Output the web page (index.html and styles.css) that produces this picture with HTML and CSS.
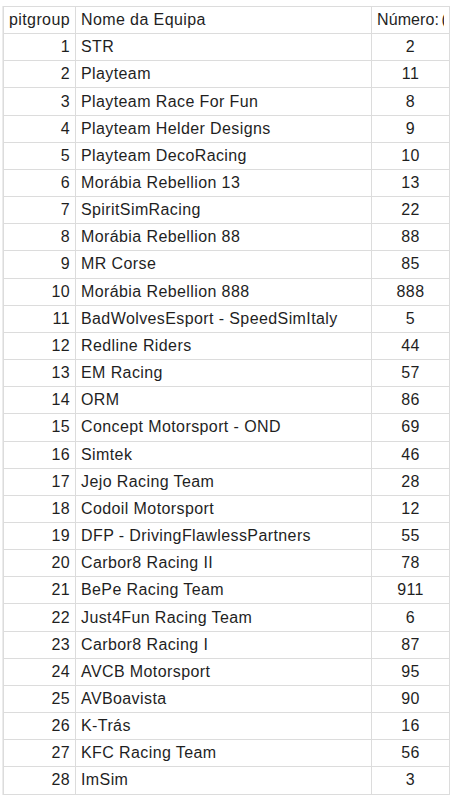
FILE: index.html
```html
<!DOCTYPE html>
<html lang="pt">
<head>
<meta charset="utf-8">
<title>pitgroup</title>
<link rel="stylesheet" href="styles.css">
</head>
<body>
<div class="sheet">
<table class="grid">
<colgroup><col class="c-id"><col class="c-name"><col class="c-num"></colgroup>
<thead>
<tr><th class="h-id">pitgroup</th><th class="h-name">Nome da Equipa</th><th class="h-num"><span class="clip">Número: (opcional)</span></th></tr>
</thead>
<tbody>
<tr><td class="id">1</td><td class="name">STR</td><td class="num">2</td></tr>
<tr><td class="id">2</td><td class="name">Playteam</td><td class="num">11</td></tr>
<tr><td class="id">3</td><td class="name">Playteam Race For Fun</td><td class="num">8</td></tr>
<tr><td class="id">4</td><td class="name">Playteam Helder Designs</td><td class="num">9</td></tr>
<tr><td class="id">5</td><td class="name">Playteam DecoRacing</td><td class="num">10</td></tr>
<tr><td class="id">6</td><td class="name">Morábia Rebellion 13</td><td class="num">13</td></tr>
<tr><td class="id">7</td><td class="name">SpiritSimRacing</td><td class="num">22</td></tr>
<tr><td class="id">8</td><td class="name">Morábia Rebellion 88</td><td class="num">88</td></tr>
<tr><td class="id">9</td><td class="name">MR Corse</td><td class="num">85</td></tr>
<tr><td class="id">10</td><td class="name">Morábia Rebellion 888</td><td class="num">888</td></tr>
<tr><td class="id">11</td><td class="name">BadWolvesEsport - SpeedSimItaly</td><td class="num">5</td></tr>
<tr><td class="id">12</td><td class="name">Redline Riders</td><td class="num">44</td></tr>
<tr><td class="id">13</td><td class="name">EM Racing</td><td class="num">57</td></tr>
<tr><td class="id">14</td><td class="name">ORM</td><td class="num">86</td></tr>
<tr><td class="id">15</td><td class="name">Concept Motorsport - OND</td><td class="num">69</td></tr>
<tr><td class="id">16</td><td class="name">Simtek</td><td class="num">46</td></tr>
<tr><td class="id">17</td><td class="name">Jejo Racing Team</td><td class="num">28</td></tr>
<tr><td class="id">18</td><td class="name">Codoil Motorsport</td><td class="num">12</td></tr>
<tr><td class="id">19</td><td class="name">DFP - DrivingFlawlessPartners</td><td class="num">55</td></tr>
<tr><td class="id">20</td><td class="name">Carbor8 Racing II</td><td class="num">78</td></tr>
<tr><td class="id">21</td><td class="name">BePe Racing Team</td><td class="num">911</td></tr>
<tr><td class="id">22</td><td class="name">Just4Fun Racing Team</td><td class="num">6</td></tr>
<tr><td class="id">23</td><td class="name">Carbor8 Racing I</td><td class="num">87</td></tr>
<tr><td class="id">24</td><td class="name">AVCB Motorsport</td><td class="num">95</td></tr>
<tr><td class="id">25</td><td class="name">AVBoavista</td><td class="num">90</td></tr>
<tr><td class="id">26</td><td class="name">K-Trás</td><td class="num">16</td></tr>
<tr><td class="id">27</td><td class="name">KFC Racing Team</td><td class="num">56</td></tr>
<tr><td class="id">28</td><td class="name">ImSim</td><td class="num">3</td></tr>
</tbody>
</table>
</div>
</body>
</html>
```
FILE: styles.css
```css
html, body {
  margin: 0;
  padding: 0;
  background: #ffffff;
}

.sheet {
  padding: 6px 0 0 3px;
}

.grid {
  border-collapse: collapse;
  table-layout: fixed;
  width: 446px;
  font-family: "Liberation Sans", Arial, sans-serif;
  font-size: 16px;
  letter-spacing: 0.4px;
  color: #1f1f1f;
  border: 1px solid #d9d9d9;
  box-shadow: -1px 0 0 #ececec, 0 1px 0 #ececec;
}

.c-id { width: 72px; }
.c-name { width: 296px; }
.c-num { width: 78px; }

.grid th,
.grid td {
  height: 27.17px;
  padding: 0 5px;
  border: 1px solid #dcdcdc;
  font-weight: normal;
  white-space: nowrap;
  overflow: hidden;
  vertical-align: middle;
  line-height: 18px;
  box-sizing: border-box;
}

.h-id {
  text-align: left;
  padding-left: 6px;
  padding-right: 0;
}

.h-name, .h-num {
  text-align: left;
}

.h-name, .name {
  padding-left: 4px;
}

.h-num {
  padding-left: 4px;
  padding-right: 0;
  letter-spacing: 0.1px;
  word-spacing: -2px;
}

.clip {
  display: block;
  overflow: hidden;
  white-space: nowrap;
}

.id {
  text-align: right;
}

.name {
  text-align: left;
}

.num {
  text-align: center;
}
```
